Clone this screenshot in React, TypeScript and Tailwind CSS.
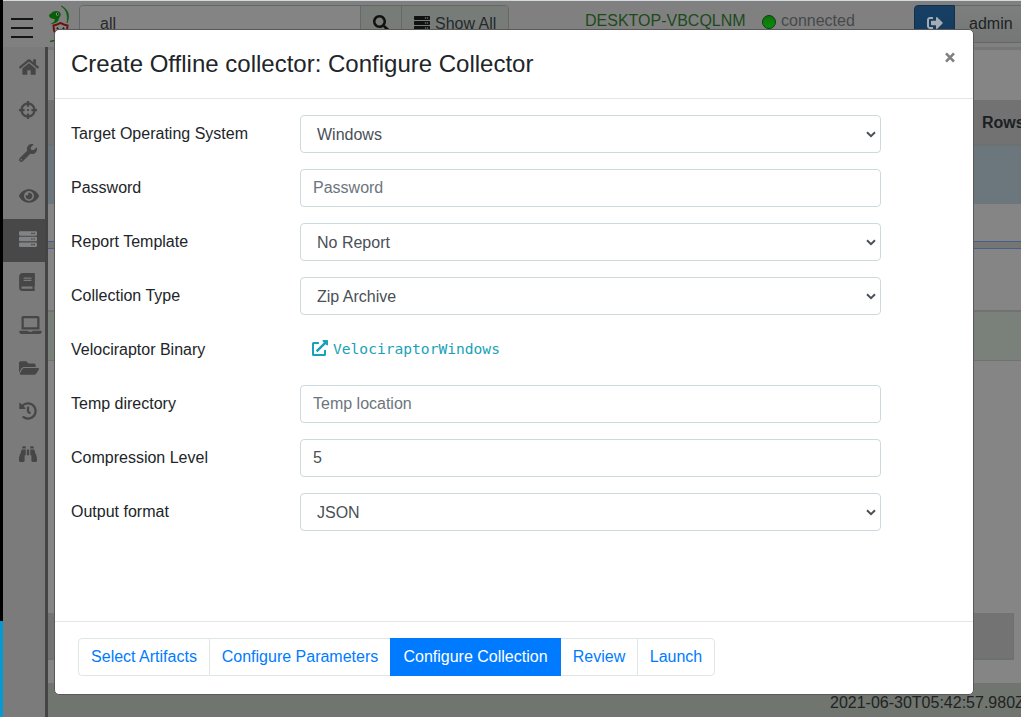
import React from "react";
import {
  FaHome, FaCrosshairs, FaWrench, FaEye, FaServer, FaBook, FaLaptop, FaFolderOpen,
  FaHistory, FaBinoculars, FaSearch, FaSignOutAlt, FaExternalLinkAlt,
} from "react-icons/fa";

const nav = [
  { Icon: FaHome, size: "h-[18px] w-[20px] shrink-0" },
  { Icon: FaCrosshairs, size: "h-[18px] w-[18px] shrink-0" },
  { Icon: FaWrench, size: "h-[18px] w-[18px] shrink-0" },
  { Icon: FaEye, size: "h-[18px] w-[20px] shrink-0" },
  { Icon: FaServer, size: "h-[18px] w-[18px] shrink-0" },
  { Icon: FaBook, size: "h-[18px] w-[16px] shrink-0" },
  { Icon: FaLaptop, size: "h-[18px] w-[23px] shrink-0" },
  { Icon: FaFolderOpen, size: "h-[18px] w-[20px] shrink-0" },
  { Icon: FaHistory, size: "h-[18px] w-[18px] shrink-0" },
  { Icon: FaBinoculars, size: "h-[18px] w-[18px] shrink-0" },
];

function Logo() {
  return (
    <svg className="h-[38px] w-[22px] shrink-0" viewBox="0 0 22 38" fill="none">
      <path d="M13 1c2.500.8 7.500 4 7.500 10 0 3-.5 5-1.500 7 .3-2 .5-4 .2-7C19 7 17 3.500 13 1z" fill="#075c07" stroke="#075c07" strokeWidth="0.600" />
      <path d="M1 11c0-1 .5-2 2-2.500C4 6.500 8 5 11 6.500c2.500 1.500 2 5 0 6.500 0 2.500-1.500 4.500-5 5.500l-4 .8 3-1.800c1.500-1 2-2 1.500-3.500C4 14 1.500 13 1 11z" fill="#076007" />
      <circle cx="9.500" cy="9" r="1.600" fill="#9aa89a" />
      <circle cx="9.700" cy="9" r="0.900" fill="#111" />
      <path d="M5.500 20.500c3 0 4.500-1 7-2.500 2.500 1.500 4 2.500 7 2.500 0 7-2.500 11-7 14-4.500-3-7-7-7-14z" fill="#858585" stroke="#6d1010" strokeWidth="2" />
      <path d="M9 22.500l1.500 2.500M16 22.500l-1.500 2.500" stroke="#222" strokeWidth="1.800" />
      <path d="M2 36.500c2-.5 3-1 5-1" stroke="#075c07" strokeWidth="1.500" />
    </svg>
  );
}

function SelectBox({ value }: { value: string }) {
  return (
    <div className="flex h-[38px] w-[581px] items-center justify-between rounded border border-[#ced9de] pl-4 pr-[4px] text-[#495057]">
      <span className="pt-px">{value}</span>
      <svg className="h-[7px] w-[10px]" viewBox="0 0 10 7" fill="none">
        <path d="M1 1.300L5 5.200L9 1.300" stroke="#495057" strokeWidth="2" />
      </svg>
    </div>
  );
}

function TextBox({ value, placeholder }: { value?: string; placeholder?: string }) {
  return (
    <input
      className="block h-[38px] w-[581px] rounded border border-[#ced9de] px-3 text-[#495057] placeholder:text-[#6c757d]"
      defaultValue={value}
      placeholder={placeholder}
    />
  );
}

function Row({ label, children }: { label: string; children: React.ReactNode }) {
  return (
    <div className="mb-4 flex h-[38px]">
      <div className="w-[229px] shrink-0 pt-[7px]">{label}</div>
      {children}
    </div>
  );
}

function Modal() {
  return (
    <div className="absolute left-[54px] top-[29px] flex h-[666px] w-[920px] flex-col rounded-[5px] border border-[#595959] bg-white text-[#212529]">
      <div className="flex h-[69px] shrink-0 justify-between border-b border-[#dee6e6] pl-4 pr-[18px]">
        <h1 className="pt-[16px] text-[24px] leading-9">Create Offline collector: Configure Collector</h1>
        <svg className="mt-[22px] h-[11px] w-[10px]" viewBox="0 0 10 11">
          <path d="M1 1.300L9 9.700M9 1.300L1 9.700" stroke="#808080" strokeWidth="2.600" />
        </svg>
      </div>
      <div className="flex-1 px-4 pt-4">
        <Row label="Target Operating System"><SelectBox value="Windows" /></Row>
        <Row label="Password"><TextBox placeholder="Password" /></Row>
        <Row label="Report Template"><SelectBox value="No Report" /></Row>
        <Row label="Collection Type"><SelectBox value="Zip Archive" /></Row>
        <Row label="Velociraptor Binary">
          <div className="flex h-[36px] items-center gap-[5px] pl-[12px] text-[#17a2b8]">
            <FaExternalLinkAlt className="mb-[3px] h-4 w-4" />
            <span className="font-['DejaVu_Sans_Mono',monospace] text-[14.6px]">VelociraptorWindows</span>
          </div>
        </Row>
        <Row label="Temp directory"><TextBox placeholder="Temp location" /></Row>
        <Row label="Compression Level"><TextBox value="5" /></Row>
        <Row label="Output format"><SelectBox value="JSON" /></Row>
      </div>
      <div className="h-[73px] shrink-0 border-t border-[#dee6e6] pl-[23px] pt-4">
        <div className="flex h-[38px] w-[637px] text-[#007bff]">
          <button className="w-[132px] rounded-l border border-[#dee6e6]">Select Artifacts</button>
          <button className="w-[180px] border-y border-[#dee6e6]">Configure Parameters</button>
          <button className="w-[171px] bg-[#007bff] text-white">Configure Collection</button>
          <button className="w-[76px] border-y border-[#dee6e6]">Review</button>
          <button className="w-[78px] rounded-r border border-[#dee6e6]">Launch</button>
        </div>
      </div>
    </div>
  );
}

export default function App() {
  return (
    <div className="relative flex h-[717px] w-[1021px] overflow-hidden bg-[#858585] font-['Liberation_Sans',Arial,sans-serif] text-[16px] leading-6">
      <div className="flex w-[3px] shrink-0 flex-col">
        <div className="h-[621px] bg-black" />
        <div className="flex-1 bg-[#0799d3]" />
      </div>
      <div className="flex min-w-0 flex-1 flex-col">
        <header className="flex h-[47px] shrink-0 items-start border-t border-[#d3dade] bg-[#808080]">
          <div className="ml-2 mt-[17px] flex w-[22px] shrink-0 flex-col gap-[7px]">
            <div className="h-[2px] bg-[#161616]" />
            <div className="h-[2px] bg-[#161616]" />
            <div className="h-[2px] bg-[#161616]" />
          </div>
          <div className="ml-[15px] mt-[4px] shrink-0"><Logo /></div>
          <div className="ml-[9px] mt-[4px] flex h-[38px] w-[430px] shrink-0 overflow-hidden rounded border border-[#646966] text-[#25292b]">
            <div className="w-[280px] shrink-0 bg-[#848484] pl-[20px] pt-[6px]">all</div>
            <div className="flex w-[41px] shrink-0 justify-center border-l border-[#646966] bg-[#777c79] pt-[9px]">
              <FaSearch className="h-4 w-4 text-[#111]" />
            </div>
            <div className="flex flex-1 gap-[5px] border-l border-[#646966] bg-[#777c79] pl-[12px] pt-[6px]">
              <FaServer className="mt-[3px] h-4 w-4 text-[#111]" />
              <span>Show All</span>
            </div>
          </div>
          <div className="ml-[76px] mt-[8px] w-[161px] shrink-0 whitespace-nowrap text-[#1c4a1c]">DESKTOP-VBCQLNM</div>
          <div className="ml-[16px] mt-[14px] h-[14px] w-[14px] shrink-0 rounded-full border border-[#113811] bg-linear-to-b from-[#0c700c] to-[#079007]" />
          <div className="ml-[5px] mt-[8px] w-[75px] shrink-0 text-[#46494b]">connected</div>
          <div className="ml-[58px] mt-[4px] flex h-[38px] w-[41px] shrink-0 justify-center rounded-l border border-[#12304d] bg-linear-to-b from-[#183f63] to-[#123b62] pt-[9px]">
            <FaSignOutAlt className="h-4 w-4 text-[#a5adb2]" />
          </div>
          <div className="mt-[4px] h-[38px] flex-1 border-y border-[#646966] bg-linear-to-b from-[#7c7f7d] to-[#747775] pl-[14px] pt-[6px] text-[#202224]">admin</div>
        </header>
        <div className="flex min-h-0 flex-1">
          <nav className="w-[42px] shrink-0 bg-[#7b7b7b]">
            {nav.map(({ Icon, size }, i) => (
              <div
                key={i}
                className={
                  i === 4
                    ? "flex h-[43px] items-center bg-[#484848] pb-[3px] pl-4 text-[#818485]"
                    : "flex h-[43px] items-center pb-[3px] pl-4 text-[#464646]"
                }
              >
                <Icon className={size} />
              </div>
            ))}
          </nav>
          <div className="w-[3px] shrink-0 bg-[#444]" />
          <main className="flex min-w-0 flex-1 flex-col">
            <div className="h-[3px] shrink-0 bg-[#767676]" />
            <div className="h-[50px] shrink-0" />
            <div className="h-[46px] shrink-0 border-b-2 border-[#6b716e] bg-[#727272] pl-[934px] pt-[11px] font-bold text-[#1c1f22]">Rows</div>
            <div className="flex h-[58px] shrink-0 items-start bg-[#6b777c]">
              <div className="ml-[6px] mt-[15px] h-[2px] w-[2px] bg-[#24282b]" />
            </div>
            <div className="flex h-[37px] shrink-0 items-start">
              <div className="ml-[6px] mt-[15px] h-[2px] w-[2px] bg-[#24282b]" />
            </div>
            <div className="h-[8px] shrink-0 border-y border-[#455f8d] bg-[#757575]" />
            <div className="h-[61px] shrink-0" />
            <div className="h-[51px] shrink-0 border-b border-t-2 border-[#727272] bg-[#7a807a]" />
            <div className="flex h-[322px] shrink-0 items-start">
              <div className="mt-[252px] h-[47px] w-[966px] border-b-2 border-r border-[#6a716e] bg-[#737373]" />
            </div>
            <footer className="flex-1 whitespace-nowrap bg-[#707570] pl-[782px] pt-[8px] text-[#202320]">2021-06-30T05:42:57.980Z</footer>
          </main>
        </div>
      </div>
      <Modal />
    </div>
  );
}
